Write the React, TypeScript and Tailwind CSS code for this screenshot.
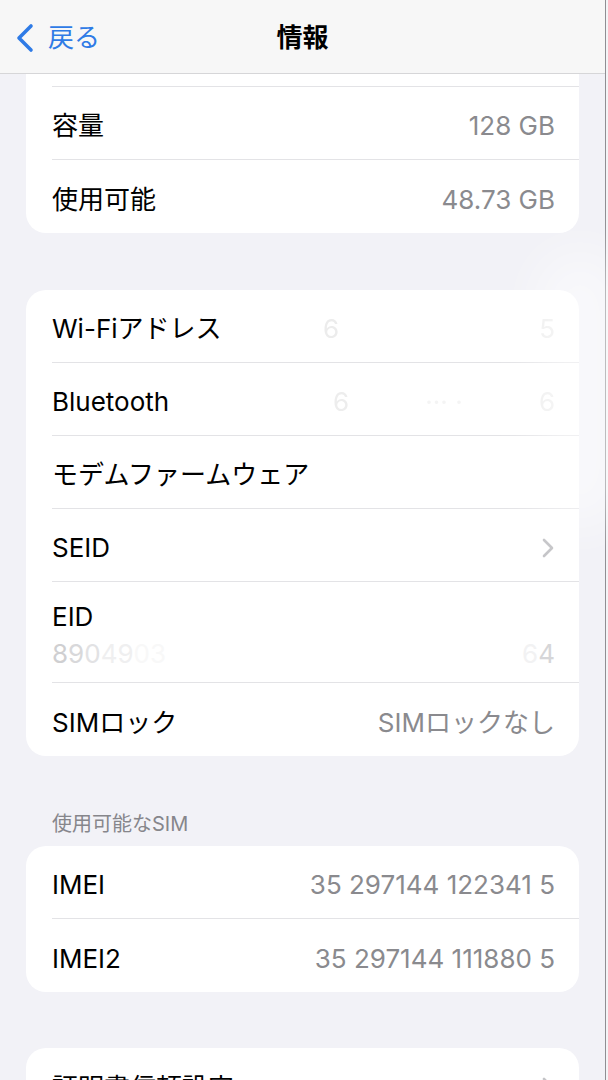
import type { ReactNode } from 'react'

const font = { fontFamily: 'Inter, "Noto Sans CJK JP", sans-serif' }

function Chevron() {
  return (
    <svg width="14" height="22" viewBox="0 0 14 22" fill="none" className="shrink-0">
      <path d="M3 3l8 8-8 8" stroke="#c4c4c7" strokeWidth="2.6" strokeLinecap="round" strokeLinejoin="round" />
    </svg>
  )
}

function Row({ label, value, chevron, last }: { label: string; value?: ReactNode; chevron?: boolean; last?: boolean }) {
  return (
    <div className="pl-[26px]">
      <div className={`flex h-[73px] items-center justify-between pt-[5px] pr-[24px] ${last ? '' : 'border-b border-[#e3e3e6]'}`}>
        <span className="text-[26px] text-black">{label}</span>
        {value !== undefined && <span className="text-[26px] text-[#8a8a8e]">{value}</span>}
        {chevron && <Chevron />}
      </div>
    </div>
  )
}

function Card({ children, className = '' }: { children: ReactNode; className?: string }) {
  return <div className={`mx-[26px] overflow-hidden rounded-[20px] bg-white ${className}`}>{children}</div>
}

export default function App() {
  return (
    <div className="flex h-[1080px] w-[608px] overflow-hidden bg-[#f2f2f7]" style={font}>
      <div className="relative flex w-[605px] flex-col">
        <header className="relative flex h-[74px] shrink-0 items-center border-b border-[#d6d6d8] bg-[#f7f7f7] pt-[2px]">
          <div className="flex items-center pl-[14px]">
            <svg width="22" height="30" viewBox="0 0 22 30" fill="none">
              <path d="M17 3L5 15l12 12" stroke="#2f7be6" strokeWidth="3.6" strokeLinecap="round" strokeLinejoin="round" />
            </svg>
            <span className="ml-[12px] text-[26px] text-[#2f7be6]">戻る</span>
          </div>
          <span className="absolute left-1/2 -translate-x-1/2 text-[26px] font-bold text-black">情報</span>
        </header>

        <div className="flex flex-col">
          <div className="mx-[26px] rounded-b-[20px] bg-white">
            <div className="h-[13px] pl-[26px]">
              <div className="h-[13px] border-b border-[#e3e3e6]" />
            </div>
            <Row label="容量" value="128 GB" />
            <Row label="使用可能" value="48.73 GB" last />
          </div>

          <Card className="mt-[57px]">
            <Row
              label="Wi-Fiアドレス"
              value={
                <span className="flex w-[232px] justify-between text-[#ececec] blur-[0.6px]">
                  <span>6</span>
                  <span>5</span>
                </span>
              }
            />
            <Row
              label="Bluetooth"
              value={
                <span className="flex w-[222px] justify-between text-[#ededed] blur-[0.6px]">
                  <span>6</span>
                  <span className="text-[#f4f4f4]">··· ·</span>
                  <span>6</span>
                </span>
              }
            />
            <Row label="モデムファームウェア" />
            <Row label="SEID" chevron />
            <div className="pl-[26px]">
              <div className="flex h-[101px] flex-col justify-center border-b border-[#e3e3e6] pt-[5px] pr-[24px]">
                <span className="text-[26px] leading-[37px] text-black">EID</span>
                <span className="flex justify-between text-[26px] leading-[37px]">
                  <span>
                    <span className="text-[#cfcfd1]">8</span>
                    <span className="text-[#d8d8da]">9</span>
                    <span className="text-[#e2e2e4]">0</span>
                    <span className="text-[#efeff0]">49</span>
                    <span className="text-[#f8f8f8]">03</span>
                  </span>
                  <span>
                    <span className="text-[#f2f2f3]">6</span>
                    <span className="text-[#d6d6d8]">4</span>
                  </span>
                </span>
              </div>
            </div>
            <Row label="SIMロック" value="SIMロックなし" last />
          </Card>

          <div className="px-[52px] pt-[56px] pb-[10px] text-[20px] leading-[24px] text-[#86868b]">使用可能なSIM</div>

          <Card>
            <Row label="IMEI" value="35 297144 122341 5" />
            <Row label="IMEI2" value="35 297144 111880 5" last />
          </Card>

          <Card className="mt-[56px]">
            <Row label="証明書信頼設定" chevron last />
          </Card>
        </div>

        <div className="pointer-events-none absolute top-[250px] right-[-20px] h-[280px] w-[90px] rounded-full bg-white/50 blur-xl" />
      </div>
      <div className="w-px bg-[#8f8f93]" />
      <div className="w-[2px] bg-[#f4f4f6]" />
    </div>
  )
}
